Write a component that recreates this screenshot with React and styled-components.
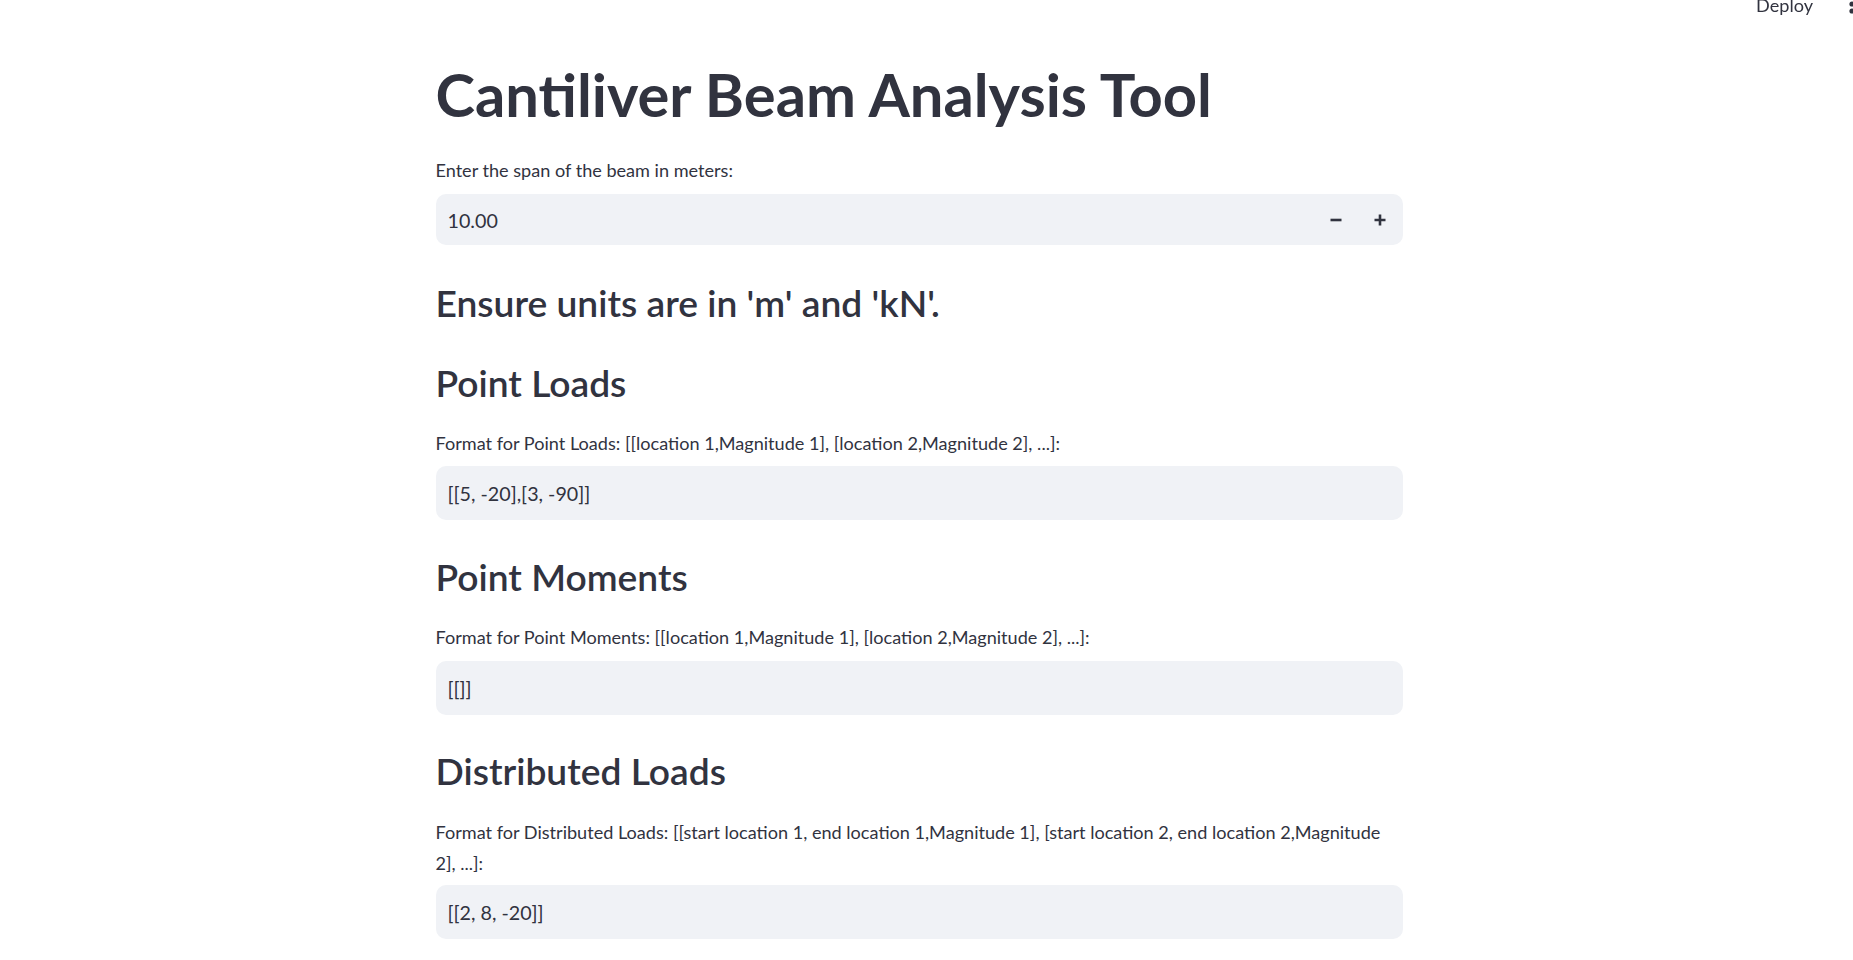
import React from "react";
import styled, { createGlobalStyle } from "styled-components";

const GlobalStyle = createGlobalStyle`
  html, body { margin: 0; padding: 0; background: #ffffff; }
  body { font-family: "Lato", "Noto Sans", sans-serif; color: #31333f; }
  * { box-sizing: border-box; }
`;

const Header = styled.header`
  position: fixed;
  top: 0;
  right: 0;
  height: 20px;
  display: flex;
  align-items: flex-start;
  gap: 35px;
`;

const DeployText = styled.span`
  font-size: 18.1px;
  line-height: 18px;
  margin-top: -4.5px;
  color: #31333f;
`;

const Page = styled.div`
  padding-right: 15px;
`;

const Main = styled.main`
  width: 967px;
  margin: 0 auto;
  padding: 58px 0 40px;
`;

const Title = styled.h1`
  margin: 0;
  font-size: 59.7px;
  line-height: 72px;
  font-weight: 700;
  color: #31333f;
`;

const Heading = styled.h3`
  margin: ${(p) => p.$mt ?? 34}px 0 0;
  font-size: 37.2px;
  line-height: 45px;
  font-weight: 600;
  color: #31333f;
`;

const Label = styled.p`
  margin: ${(p) => p.$mt ?? 23}px 0 ${(p) => p.$mb ?? 7.5}px;
  font-size: 18.1px;
  line-height: 31px;
  color: #31333f;
`;

const Field = styled.div`
  display: flex;
  align-items: center;
  height: ${(p) => p.$h}px;
  background: #f0f2f6;
  border-radius: 10px;
  padding: 0 1px 0 12px;
  font-size: 19.7px;
  color: #31333f;
`;

const Value = styled.span`
  flex: 1;
  padding-top: 1px;
`;

const StepButton = styled.span`
  width: 44px;
  height: 100%;
  display: flex;
  align-items: center;
  justify-content: center;
`;

const Minus = () => (
  <svg width="12" height="12" viewBox="0 0 12 12">
    <path d="M0.5 6h11" stroke="#31333f" strokeWidth="2.6" />
  </svg>
);

const Plus = () => (
  <svg width="12" height="12" viewBox="0 0 12 12">
    <path d="M0.5 6h11M6 0.5v11" stroke="#31333f" strokeWidth="2.6" />
  </svg>
);

const KebabSvg = styled.svg`
  margin-right: -3px;
  margin-top: -3px;
`;

const Kebab = () => (
  <KebabSvg width="8" height="20" viewBox="0 0 8 20">
    <circle cx="4" cy="0" r="2.6" fill="#31333f" />
    <circle cx="4" cy="7" r="2.6" fill="#31333f" />
    <circle cx="4" cy="14" r="2.6" fill="#31333f" />
  </KebabSvg>
);

export default function App() {
  return (
    <>
      <GlobalStyle />
      <Header>
        <DeployText>Deploy</DeployText>
        <Kebab />
      </Header>
      <Page>
        <Main>
          <Title>Cantiliver Beam Analysis Tool</Title>
          <Label $mt={24.5} $mb={8.5}>Enter the span of the beam in meters:</Label>
          <Field $h={51}>
            <Value>10.00</Value>
            <StepButton><Minus /></StepButton>
            <StepButton><Plus /></StepButton>
          </Field>
          <Heading $mt={34.5}>Ensure units are in 'm' and 'kN'.</Heading>
          <Heading $mt={35}>Point Loads</Heading>
          <Label>Format for Point Loads: [[location 1,Magnitude 1], [location 2,Magnitude 2], ...]:</Label>
          <Field $h={54}><Value>[[5, -20],[3, -90]]</Value></Field>
          <Heading>Point Moments</Heading>
          <Label>Format for Point Moments: [[location 1,Magnitude 1], [location 2,Magnitude 2], ...]:</Label>
          <Field $h={54}><Value>[[]]</Value></Field>
          <Heading $mt={33.5}>Distributed Loads</Heading>
          <Label $mt={23.5} $mb={6}>Format for Distributed Loads: [[start location 1, end location 1,Magnitude 1], [start location 2, end location 2,Magnitude 2], ...]:</Label>
          <Field $h={54}><Value>[[2, 8, -20]]</Value></Field>
        </Main>
      </Page>
    </>
  );
}
